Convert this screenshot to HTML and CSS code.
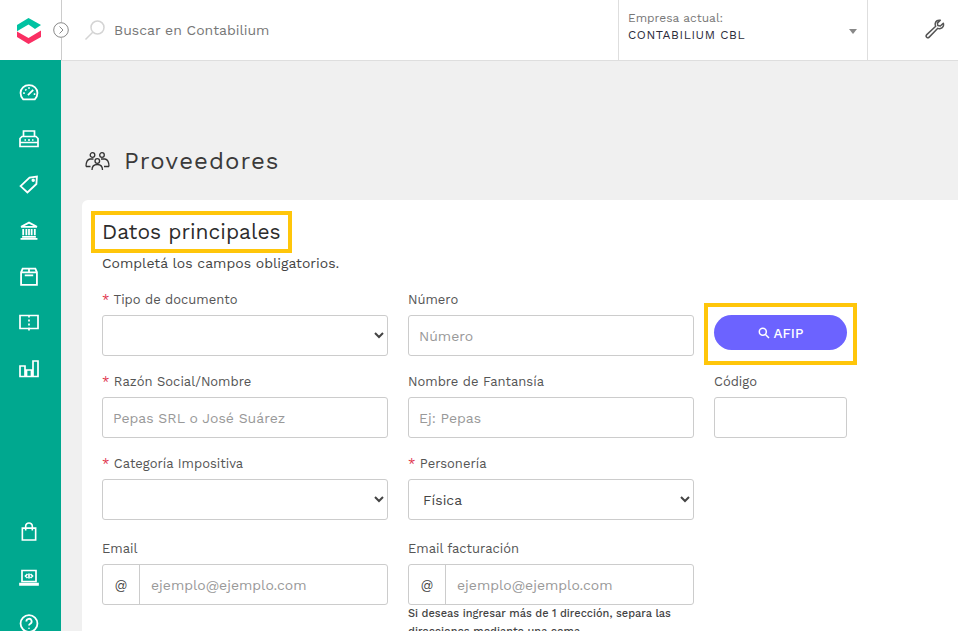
FILE: index.html
```html
<!DOCTYPE html>
<html lang="es">
<head>
<meta charset="utf-8">
<title>Proveedores</title>
<link rel="stylesheet" href="styles.css">
</head>
<body>
<header class="topbar">
  <div class="brand">
    <svg class="logo" width="24" height="26" viewBox="0 0 24 26"><path fill="#00c2a2" d="M11.500 0 24 7 18 11 11.500 6.500 5.500 10 0 13.200 0 7Z"/><path fill="#fa2f63" d="M0 13.500 11.500 20 24 12.500 24 19 11.500 26 0 19Z"/></svg>
  </div>
  <button class="toggle" aria-label="Abrir menú"><svg width="16" height="16" viewBox="0 0 16 16" fill="none" stroke="#888" stroke-width="1"><circle cx="8" cy="8" r="7.300"/><path d="M6.500 4.500 10 8 6.500 11.500"/></svg></button>
  <div class="search">
    <svg width="22" height="22" viewBox="0 0 22 22" fill="none" stroke="#d4d4d4" stroke-width="1.500"><circle cx="13.500" cy="8.500" r="6.500"/><path d="M8.700 13.300 1.500 20.500"/></svg>
    <span>Buscar en Contabilium</span>
  </div>
  <div class="company">
    <div class="company-text">
      <span class="company-label">Empresa actual:</span>
      <span class="company-name">CONTABILIUM CBL</span>
    </div>
    <span class="caret"></span>
  </div>
  <div class="tools">
    <svg width="20" height="20" viewBox="0 0 20 20" fill="none" stroke="#555" stroke-width="1.500" stroke-linejoin="round"><path d="M18.300 4.200 15.300 7 12.800 6.500 12.400 4.100 15.300 1.300C13 .7 10.500 2 10.200 4.500 10.100 5.500 10.300 6.500 10.700 7.200L1.800 15.600C.9 16.500 1 17.500 1.700 18.200 2.400 18.900 3.400 18.900 4.200 18.100L12.800 9.300C13.600 9.700 14.500 9.800 15.400 9.600 17.700 9.100 19.100 6.700 18.300 4.200Z"/></svg>
  </div>
</header>
<div class="shell">
  <nav class="sidebar">
    <div class="nav-group">
      <a class="nav-item"><svg viewBox="0 0 18 18"><path d="M3.500 15.500C2 14 1 12 1 9.500 1 5 4.500 2 9 2s8 3 8 7.500c0 2.500-1 4.500-2.500 6Z"/><path d="M8 11.500 13 6.500M3.500 9.500H5M13.500 10.500H15M5.500 6 6.500 7M9 4v1.500"/></svg></a>
      <a class="nav-item"><svg viewBox="0 0 20 18"><path d="M3 7h14l2 2v8H1V9ZM4.500 7V1.500h11V7M1 13h18M5.500 10.500h1.500M9 10.500h2M13 10.500h1.500"/></svg></a>
      <a class="nav-item"><svg viewBox="0 0 18 18"><path d="M1 10.500 9.500 2.500 16.500 1.500 16 8.500 7.500 16.500Z"/><circle cx="13" cy="5" r=".8"/></svg></a>
      <a class="nav-item"><svg viewBox="0 0 18 18"><path d="M1.500 5.500 9 1.500l7.500 4ZM3.500 7.500v6M6.500 7.500v6M11.500 7.500v6M14.500 7.500v6M9 7.500v6M2.500 15h13M1 17h16"/></svg></a>
      <a class="nav-item"><svg viewBox="0 0 18 18"><path d="M3 1.500h12l1.500 3.500V17h-15V5ZM1.500 5h15M9 1.500V5M5 8h8"/></svg></a>
      <a class="nav-item"><svg viewBox="0 0 20 18"><path d="M10 2H1v13h18V2h-9M10 2v2M10 6v2M10 10v2M10 14v3"/></svg></a>
      <a class="nav-item"><svg viewBox="0 0 20 18"><path d="M1 6.500h5V17H1ZM7.500 10.500h5V17h-5ZM14 1.500h5V17h-5Z"/></svg></a>
    </div>
    <div class="nav-group">
      <a class="nav-item"><svg viewBox="0 0 18 20"><path d="M2 6.500h14V19H2ZM5.500 9V4.500a3.500 3.500 0 0 1 7 0V9"/></svg></a>
      <a class="nav-item"><svg viewBox="0 0 20 18"><path d="M3 2h14v11H3ZM1 15h18v1.500H1ZM8.500 5.500 6.500 7.500l2 2M11.500 5.500l2 2-2 2M10 5v5"/></svg></a>
      <a class="nav-item"><svg viewBox="0 0 18 18"><circle cx="9" cy="9" r="8"/><path d="M6.500 7a2.500 2.500 0 1 1 3.700 2.200C9.400 9.700 9 10.200 9 11M9 13v1"/></svg></a>
    </div>
  </nav>
  <main class="content">
    <div class="page-head">
      <svg width="25" height="18" viewBox="0 0 25 18" fill="none" stroke="#333" stroke-width="1.300"><circle cx="7.500" cy="3" r="2.300"/><circle cx="17" cy="3" r="2.300"/><circle cx="12.300" cy="9" r="2.300"/><path d="M1 14.500C1 10.500 2.500 7.500 5 7H8.500M24 14.500C24 10.500 22.500 7.500 20 7H16M7 18C7 14.500 9 12.500 12.300 12.500S17.500 14.500 17.500 18M1 14.500H5.500M24 14.500H19"/></svg>
      <h1>Proveedores</h1>
    </div>
    <section class="card">
      <h2 class="section-title">Datos principales</h2>
      <p class="section-sub">Completá los campos obligatorios.</p>
      <form class="fields">
        <div class="field">
          <label><em>*</em> Tipo de documento</label>
          <select class="control"><option></option></select>
        </div>
        <div class="field">
          <label>Número</label>
          <input class="control" placeholder="Número">
        </div>
        <div class="field afip-cell">
          <span class="afip-mark"></span>
          <button type="button" class="afip"><svg width="12" height="12" viewBox="0 0 12 12" fill="none" stroke="#fff" stroke-width="1.500"><circle cx="4.800" cy="4.800" r="3.500"/><path d="M7.500 7.500 11 11"/></svg>AFIP</button>
        </div>
        <div class="field">
          <label><em>*</em> Razón Social/Nombre</label>
          <input class="control" placeholder="Pepas SRL o José Suárez">
        </div>
        <div class="field">
          <label>Nombre de Fantansía</label>
          <input class="control" placeholder="Ej: Pepas">
        </div>
        <div class="field">
          <label>Código</label>
          <input class="control">
        </div>
        <div class="field">
          <label><em>*</em> Categoría Impositiva</label>
          <select class="control"><option></option></select>
        </div>
        <div class="field">
          <label><em>*</em> Personería</label>
          <select class="control"><option>Física</option></select>
        </div>
        <div class="field-empty"></div>
        <div class="field field-email">
          <label>Email</label>
          <div class="group"><span class="addon">@</span><input placeholder="ejemplo@ejemplo.com"></div>
        </div>
        <div class="field field-email">
          <label>Email facturación</label>
          <div class="group"><span class="addon">@</span><input placeholder="ejemplo@ejemplo.com"></div>
          <small>Si deseas ingresar más de 1 dirección, separa las direcciones mediante una coma.</small>
        </div>
      </form>
    </section>
  </main>
</div>
</body>
</html>
```
FILE: styles.css
```css
* { box-sizing: border-box; }
html, body { margin: 0; height: 631px; overflow: hidden; }
body { font-family: "Work Sans", Inter, "Open Sans", sans-serif; color: #333; background: #f0f0f0; font-size: 14px; }

.topbar { display: flex; align-items: stretch; height: 60px; background: #fff; }
.brand { width: 62px; display: flex; align-items: center; padding-left: 17px; border-right: 1px solid #ccc; }
.logo { display: block; margin-top: 1px; }
.toggle { position: absolute; left: 53px; top: 22px; width: 16px; height: 16px; padding: 0; border: 0; background: #fff; border-radius: 50%; }
.toggle svg { display: block; }
.search { flex: 1; display: flex; align-items: center; gap: 8px; padding-left: 22px; color: #777; font-size: 14px; }
.company { width: 250px; border-left: 1px solid #dedede; border-right: 1px solid #dedede; padding: 11px 10px 0 9px; display: flex; justify-content: space-between; align-items: flex-start; }
.company-text { display: flex; flex-direction: column; gap: 3px; }
.company-label { font-size: 12px; color: #777; }
.company-name { font-size: 12px; color: #2b2b3a; letter-spacing: .6px; }
.caret { width: 0; height: 0; margin-top: 18px; border-left: 4px solid transparent; border-right: 4px solid transparent; border-top: 5px solid #888; }
.tools { width: 90px; display: flex; align-items: center; justify-content: flex-end; padding-right: 13px; padding-bottom: 2px; }

.shell { display: flex; height: 571px; }
.sidebar { width: 61px; flex: none; background: #00a88f; display: flex; flex-direction: column; justify-content: space-between; padding: 23px 3px 0 0; overflow: hidden; height: 571px; }
.nav-group { display: flex; flex-direction: column; }
.nav-group:last-child { margin-bottom: -29px; }
.nav-item { height: 46px; display: flex; justify-content: center; align-items: flex-start; }
.nav-item svg { width: 20px; height: 19px; fill: none; stroke: #fff; stroke-width: 1.700; }

.content { flex: 1; min-width: 0; padding: 86px 0 0 21px; border-top: 1px solid #dedede; }
.page-head { display: flex; align-items: center; gap: 14px; padding-left: 3px; height: 28px; margin-bottom: 25px; }
.page-head svg { flex: none; }
h1 { margin: 0; font-size: 24px; font-weight: 400; color: #3a3a3a; letter-spacing: 1.050px; }

.card { background: #fff; border-radius: 6px 0 0 0; padding: 11px 0 0 20px; height: 431px; }
.section-title { display: inline-block; margin: 0 0 0 -11px; padding: 3px 7px 4px 7px; border: 4px solid #ffc60a; font-size: 21px; font-weight: 450; color: #2c2c2c; line-height: 27px; white-space: nowrap; }
.section-sub { margin: 2px 0 0; font-size: 14px; line-height: 16px; color: #444; }

.fields { display: grid; grid-template-columns: 286px 286px 133px; column-gap: 20px; margin-top: 21px; }
.field { position: relative; height: 82px; }
.field-email { height: auto; padding-top: 3px; }
.field label { display: block; font-size: 13px; line-height: 15px; height: 23px; color: #555; }
.field label em { color: #e0324c; font-style: normal; }
.control { display: block; width: 100%; height: 41px; border: 1px solid #ccc; border-radius: 3px; background: #fff; font: inherit; color: #444; padding: 0 10px; }
input::placeholder { color: #999; opacity: 1; }
.afip-cell { height: 82px; }
.afip { position: relative; display: flex; align-items: center; justify-content: center; gap: 4px; width: 133px; height: 35px; margin-top: 23px; border: 0; border-radius: 18px; background: #6c63ff; color: #fff; font: 500 13.500px "Work Sans", Inter, sans-serif; }
.afip-mark { position: absolute; left: -10px; right: -10px; top: 11px; height: 62px; border: 4px solid #ffc60a; }

.group { display: flex; height: 41px; border: 1px solid #ccc; border-radius: 3px; background: #fff; }
.addon { width: 37px; flex: none; border-right: 1px solid #ccc; display: flex; align-items: center; justify-content: center; color: #444; font-size: 13px; }
.group input { flex: 1; min-width: 0; border: 0; outline: 0; padding: 0 11px; font: inherit; background: transparent; }
.field small { display: block; margin-top: 0; font-size: 11px; line-height: 18px; font-weight: 500; color: #444; }
```
